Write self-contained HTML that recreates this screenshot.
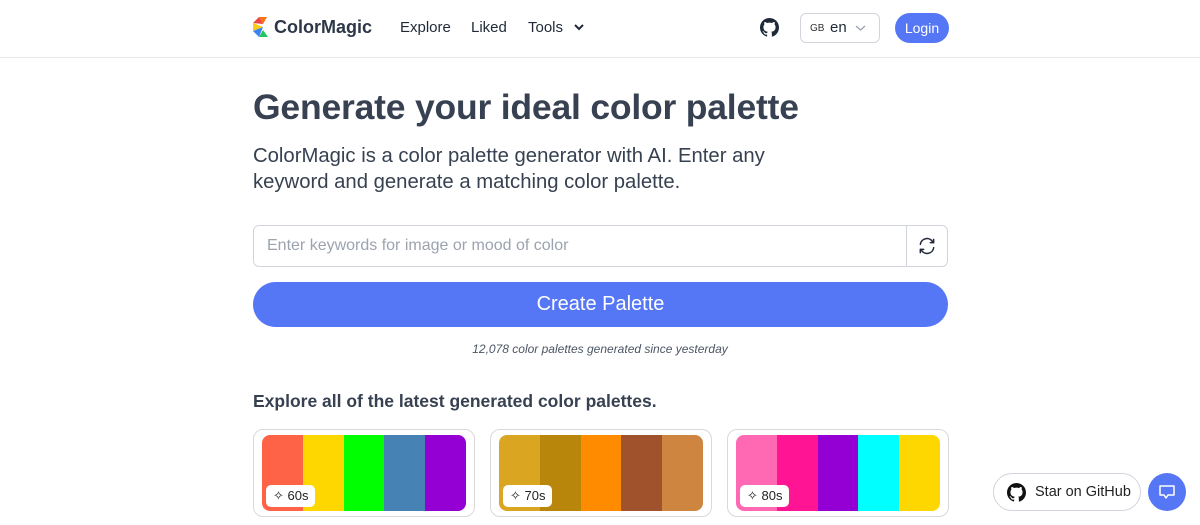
<!DOCTYPE html>
<html><head><meta charset="utf-8"><style>
*{box-sizing:border-box;margin:0;padding:0}
body{width:1200px;height:525px;overflow:hidden;background:#fff;font-family:"Liberation Sans",sans-serif;color:#374151;position:relative}
.hdr{height:58px;border-bottom:1px solid #e5e7eb;position:relative}
.abs{position:absolute}
.nav{font-size:15px;color:#1f2937;top:19px}
h1{position:absolute;left:253px;top:87px;font-size:35.5px;font-weight:bold;color:#374151;letter-spacing:-0.2px}
.sub{position:absolute;left:253px;top:143px;font-size:20.3px;line-height:26px;color:#374151;width:560px}
.inp{position:absolute;left:253px;top:225px;width:695px;height:42px;border:1px solid #d1d5db;border-radius:6px}
.inp span{position:absolute;left:13px;top:11px;font-size:16px;color:#9ca3af}
.inp .r{position:absolute;right:0;top:0;width:41px;height:40px;border-left:1px solid #d1d5db}
.btn{position:absolute;left:253px;top:282px;width:695px;height:45px;border-radius:23px;background:#5577f5;color:#fff;font-size:20px;text-align:center;line-height:45px}
.cnt{position:absolute;left:0;width:1200px;text-align:center;top:342px;font-size:12px;font-style:italic;color:#4b5563}
h2{position:absolute;left:253px;top:391px;font-size:17.5px;font-weight:bold;color:#374151}
.card{position:absolute;top:429px;width:222px;height:88px;border:1px solid #d9d9d9;border-radius:10px;padding:5px 8px}
.pal{display:flex;height:76px;border-radius:8px;overflow:hidden;position:relative}
.pal div{flex:1}
.bdg{position:absolute;left:4px;bottom:4px;background:#fff;border-radius:5px;height:22px;padding:0 7px;font-size:13px;line-height:22px;color:#222}
</style></head><body>
<div class="hdr">
<svg class="abs" style="left:253px;top:17px" width="19" height="20" viewBox="0 0 19 20"><polygon points="6,0 14,0 10,7" fill="#f97316"/><polygon points="0,6 6,0 10,7" fill="#ef4444"/><polygon points="0,6 10,10 0,14" fill="#facc15"/><polygon points="0,14 10,10 6,20" fill="#3b82f6"/><polygon points="6,20 10,13 15,20" fill="#22c55e"/></svg>
<div class="abs" style="left:274px;top:17px;font-size:18px;font-weight:bold;color:#2d3748">ColorMagic</div>
<div class="abs nav" style="left:400px">Explore</div>
<div class="abs nav" style="left:471px">Liked</div>
<div class="abs nav" style="left:528px">Tools</div>
<svg class="abs" style="left:573px;top:23px" width="12" height="9" viewBox="0 0 12 9"><path d="M2 2l4 4 4-4" stroke="#1f2937" stroke-width="2" fill="none"/></svg>
<svg class="abs" style="left:760px;top:18px" width="19" height="19" viewBox="0 0 16 16"><path fill="#1f2937" d="M8 0C3.58 0 0 3.58 0 8c0 3.54 2.29 6.53 5.47 7.59.4.07.55-.17.55-.38v-1.33c-2.23.48-2.7-1.07-2.7-1.07-.36-.92-.89-1.17-.89-1.17-.73-.5.05-.49.05-.49.8.06 1.23.83 1.23.83.72 1.23 1.87.87 2.33.67.07-.52.28-.87.5-1.07-1.78-.2-3.64-.89-3.64-3.95 0-.87.31-1.59.82-2.15-.08-.2-.36-1.02.08-2.12 0 0 .67-.21 2.2.82a7.6 7.6 0 014 0c1.53-1.04 2.2-.82 2.2-.82.44 1.1.16 1.92.08 2.12.51.56.82 1.27.82 2.15 0 3.07-1.87 3.75-3.65 3.95.29.25.54.73.54 1.48v2.2c0 .21.15.46.55.38A8 8 0 0016 8c0-4.42-3.58-8-8-8z"/></svg>
<div class="abs" style="left:800px;top:13px;width:80px;height:30px;border:1px solid #d1d5db;border-radius:6px"><span class="abs" style="left:9px;top:9px;font-size:10px;color:#333">GB</span><span class="abs" style="left:29px;top:5px;font-size:15px;color:#1f2937">en</span><svg class="abs" style="left:54px;top:11px" width="11" height="7" viewBox="0 0 11 7"><path d="M1 1l4.5 4 4.5-4" stroke="#9ca3af" stroke-width="1.3" fill="none"/></svg></div>
<div class="abs" style="left:895px;top:13px;width:54px;height:30px;border-radius:15px;background:#5577f5;color:#fff;font-size:14px;text-align:center;line-height:30px">Login</div>
</div>
<h1>Generate your ideal color palette</h1>
<div class="sub">ColorMagic is a color palette generator with AI. Enter any keyword and generate a matching color palette.</div>
<div class="inp"><span>Enter keywords for image or mood of color</span><div class="r"><svg class="abs" style="left:10px;top:10px" width="20" height="20" viewBox="0 0 24 24" fill="none" stroke="#1f2937" stroke-width="1.8" stroke-linecap="round" stroke-linejoin="round"><path d="M4 10a8 8 0 0114.5-3.5L20 8M20 4v4h-4M20 14a8 8 0 01-14.5 3.5L4 16M4 20v-4h4"/></svg></div></div>
<div class="btn">Create Palette</div>
<div class="cnt">12,078 color palettes generated since yesterday</div>
<h2>Explore all of the latest generated color palettes.</h2>
<div class="card" style="left:253px"><div class="pal"><div style="background:#ff6347"></div><div style="background:#ffd700"></div><div style="background:#00ff00"></div><div style="background:#4682b4"></div><div style="background:#9400d3"></div><span class="bdg">✧ 60s</span></div></div>
<div class="card" style="left:490px"><div class="pal"><div style="background:#daa520"></div><div style="background:#b8860b"></div><div style="background:#ff8c00"></div><div style="background:#a0522d"></div><div style="background:#cd853f"></div><span class="bdg">✧ 70s</span></div></div>
<div class="card" style="left:727px"><div class="pal"><div style="background:#ff69b4"></div><div style="background:#ff1493"></div><div style="background:#9400d3"></div><div style="background:#00ffff"></div><div style="background:#ffd700"></div><span class="bdg">✧ 80s</span></div></div>
<div class="abs" style="left:993px;top:473px;width:148px;height:38px;border:1px solid #d1d5db;border-radius:19px;background:#fff"><svg class="abs" style="left:13px;top:9px" width="19" height="19" viewBox="0 0 16 16"><path fill="#111" d="M8 0C3.58 0 0 3.58 0 8c0 3.54 2.29 6.53 5.47 7.59.4.07.55-.17.55-.38v-1.33c-2.230.48-2.7-1.070-2.7-1.07-.36-.92-.89-1.17-.89-1.17-.73-.5.05-.49.05-.49.8.06 1.23.83 1.23.83.72 1.23 1.87.87 2.33.67.07-.52.28-.87.5-1.07-1.78-.2-3.64-.89-3.64-3.95 0-.87.31-1.59.82-2.15-.08-.2-.36-1.02.08-2.12 0 0 .67-.21 2.2.82a7.6 7.6 0 014 0c1.53-1.04 2.2-.82 2.2-.82.44 1.1.16 1.92.08 2.12.51.56.82 1.27.82 2.15 0 3.07-1.87 3.75-3.65 3.95.29.25.54.73.54 1.48v2.2c0 .21.15.46.55.38A8 8 0 0016 8c0-4.42-3.58-8-8-8z"/></svg><span class="abs" style="left:41px;top:10px;font-size:14.5px;color:#222">Star on GitHub</span></div>
<div class="abs" style="left:1148px;top:473px;width:38px;height:38px;border-radius:50%;background:#5577f5"><svg class="abs" style="left:10px;top:10px" width="18" height="18" viewBox="0 0 18 18" fill="none" stroke="#fff" stroke-width="1.5" stroke-linejoin="round"><path d="M2 3h14v9H10l-2 3-2-3H2z"/></svg></div>
</body></html>
